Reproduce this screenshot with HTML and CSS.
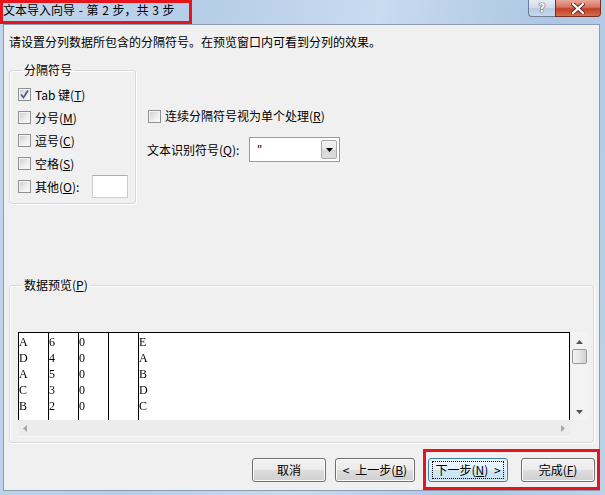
FILE: index.html
```html
<!DOCTYPE html>
<html lang="zh-CN">
<head>
<meta charset="utf-8">
<title>文本导入向导</title>
<link rel="stylesheet" href="styles.css">
</head>
<body>
<div class="window">
  <header class="titlebar">
    <span class="title">文本导入向导 - 第 2 步，共 3 步</span>
    <div class="caption-btns">
      <span class="cap help">?</span>
      <span class="cap close"><svg width="14" height="11" viewBox="0 0 14 11"><path d="M2 1 L12 10 M12 1 L2 10" stroke="#5a2a24" stroke-width="4" stroke-linecap="square"/><path d="M2 1 L12 10 M12 1 L2 10" stroke="#fff" stroke-width="2.2" stroke-linecap="square"/></svg></span>
    </div>
  </header>
  <main class="client">
    <p class="intro">请设置分列数据所包含的分隔符号。在预览窗口内可看到分列的效果。</p>
    <div class="options">
      <fieldset class="group delims">
        <legend>分隔符号</legend>
        <div class="check"><span class="box"><svg width="11" height="11" viewBox="0 0 11 11"><path d="M2 5.5 L4.5 8.5 L9 1.5" fill="none" stroke="#4a5f97" stroke-width="1.8"/></svg></span>Tab 键(<u>T</u>)</div>
        <div class="check"><span class="box"></span>分号(<u>M</u>)</div>
        <div class="check"><span class="box"></span>逗号(<u>C</u>)</div>
        <div class="check"><span class="box"></span>空格(<u>S</u>)</div>
        <div class="check"><span class="box"></span>其他(<u>O</u>):<span class="textbox"></span></div>
      </fieldset>
      <div class="side">
        <div class="check consec"><span class="box"></span>连续分隔符号视为单个处理(<u>R</u>)</div>
        <div class="qualifier">
          <span class="q-label">文本识别符号(<u>Q</u>):</span>
          <div class="combo">
            <span class="combo-val">"</span>
            <span class="combo-btn"><svg width="7" height="4" viewBox="0 0 7 4"><path d="M0 0 H7 L3.5 4 Z" fill="#000"/></svg></span>
          </div>
        </div>
      </div>
    </div>
    <fieldset class="group preview">
      <legend>数据预览(<u>P</u>)</legend>
      <div class="pv">
        <div class="pv-main">
          <div class="grid">
            <div class="col"><div>A</div><div>D</div><div>A</div><div>C</div><div>B</div></div>
            <div class="col"><div>6</div><div>4</div><div>5</div><div>3</div><div>2</div></div>
            <div class="col"><div>0</div><div>0</div><div>0</div><div>0</div><div>0</div></div>
            <div class="col"></div>
            <div class="col last"><div>E</div><div>A</div><div>B</div><div>D</div><div>C</div></div>
          </div>
          <div class="hscroll">
            <svg width="4" height="7" viewBox="0 0 4 7"><path d="M4 0 V7 L0 3.5 Z" fill="#a6a6a6"/></svg>
            <svg width="4" height="7" viewBox="0 0 4 7"><path d="M0 0 V7 L4 3.5 Z" fill="#a6a6a6"/></svg>
          </div>
        </div>
        <div class="vscroll">
          <svg width="7" height="4" viewBox="0 0 7 4"><path d="M0 4 H7 L3.5 0 Z" fill="#555"/></svg>
          <span class="thumb"></span>
          <span class="spacer"></span>
          <svg width="7" height="4" viewBox="0 0 7 4"><path d="M0 0 H7 L3.5 4 Z" fill="#555"/></svg>
        </div>
      </div>
    </fieldset>
    <div class="buttons">
      <button class="btn narrow">取消</button>
      <button class="btn wide">&lt; 上一步(<u>B</u>)</button>
      <button class="btn wide default"><span class="focus">下一步(<u>N</u>) &gt;</span></button>
      <button class="btn narrow">完成(<u>F</u>)</button>
    </div>
  </main>
</div>
<div class="mark mark-title"></div>
<div class="mark mark-buttons"></div>
</body>
</html>
```

FILE: styles.css
```css
* { box-sizing: border-box; }

html, body {
  margin: 0;
  padding: 0;
}

body {
  width: 605px;
  height: 495px;
  overflow: hidden;
  position: relative;
  font-family: "Noto Sans CJK SC", "Noto Sans", sans-serif;
  font-size: 12px;
  line-height: 16px;
  color: #000;
  background: linear-gradient(100deg, #c2d6ec 0%, #b6cde8 30%, #c8dbef 55%, #adc6e3 80%, #bcd2ea 100%);
}

.window {
  width: 605px;
  height: 495px;
  display: flex;
  flex-direction: column;
}

/* title bar */
.titlebar {
  height: 24px;
  display: flex;
  justify-content: space-between;
  align-items: flex-start;
}

.title {
  padding: 2px 0 0 3px;
  font-size: 12px;
  line-height: 16px;
  color: #000;
  word-spacing: 1px;
}

.caption-btns {
  display: flex;
  margin-right: 4px;
}

.cap {
  height: 17px;
  display: flex;
  align-items: center;
  justify-content: center;
  border: 1px solid #6b7c93;
  border-top: none;
}

.help {
  width: 27px;
  border-right: none;
  border-bottom-left-radius: 4px;
  background: linear-gradient(#e4ecf5 0%, #cfdbea 50%, #b9cbe0 51%, #c8d8ea 100%);
  color: #fff;
  font-family: "DejaVu Sans", sans-serif;
  font-weight: bold;
  font-size: 12px;
  text-shadow: 0 0 1px #3d4a5c, 0 0 1px #3d4a5c, 0 0 1px #3d4a5c;
}

.close {
  width: 46px;
  border-color: #7a2b22;
  border-bottom-right-radius: 4px;
  background: linear-gradient(#e9a99e 0%, #d7725f 45%, #c23f26 55%, #d3704f 100%);
}

/* client area */
.client {
  margin: 0 5px 4px 3px;
  flex: 1;
  background: #f0f0f0;
  border: 1px solid #8a9db5;
  padding: 0 4px 0 5px;
  display: flex;
  flex-direction: column;
}

.intro {
  margin: 9px 0 0 0;
  line-height: 16px;
}

.options {
  display: flex;
  margin-top: 12px;
}

/* group boxes */
.group {
  margin: 0;
  border: 1px solid #d5d9de;
  border-radius: 3px;
  box-shadow: inset 1px 1px 0 #fff, 1px 1px 0 #fff;
  min-width: 0;
}

.group legend {
  margin-left: 4px;
  padding: 0 2px;
  line-height: 16px;
}

.delims {
  width: 127px;
  padding: 5px 7px 5px 8px;
}

.check {
  height: 23px;
  display: flex;
  align-items: center;
  white-space: nowrap;
}

.box {
  width: 13px;
  height: 13px;
  flex: none;
  margin-right: 4px;
  border: 1px solid #8e8f8f;
  background: linear-gradient(135deg, #cbcbcb 0%, #eeeeee 60%, #fafafa 100%);
  box-shadow: inset 0 0 0 1px #f4f4f4;
  display: flex;
  align-items: center;
  justify-content: center;
}

.textbox {
  margin-left: auto;
  width: 36px;
  height: 23px;
  background: #fff;
  border: 1px solid #c9ced6;
  border-top-color: #abadb3;
}

.side {
  margin-left: 11px;
  padding-top: 44px;
  display: flex;
  flex-direction: column;
}

.consec {
  height: 20px;
  margin-left: 1px;
}

.qualifier {
  margin-top: 11px;
  display: flex;
  align-items: center;
  height: 25px;
}

.q-label {
  width: 102px;
}

.combo {
  width: 91px;
  height: 25px;
  background: #fff;
  border: 1px solid #9a9a9a;
  display: flex;
  align-items: center;
  padding: 2px;
}

.combo-val {
  flex: 1;
  padding-left: 5px;
  font-size: 11px;
}

.combo-btn {
  width: 16px;
  height: 19px;
  border: 1px solid #a8a8a8;
  border-radius: 2px;
  background: linear-gradient(#f4f4f4 0%, #e6e6e6 50%, #d6d6d6 51%, #dcdcdc 100%);
  display: flex;
  align-items: center;
  justify-content: center;
}

/* preview */
.preview {
  margin-top: 73px;
  width: 585px;
  padding: 39px 0 5px 8px;
}

.pv {
  display: flex;
  align-items: flex-start;
}

.pv-main {
  width: 552px;
}

.grid {
  height: 88px;
  display: flex;
  background: #fff;
  border-top: 1px solid #000;
  border-right: 1px solid #000;
  font-family: "Liberation Serif", serif;
  font-size: 12px;
  line-height: 16px;
  padding-top: 1px;
  color: #000;
  filter: grayscale(1);
}

.col {
  width: 30px;
  border-left: 1px solid #000;
  margin-top: -1px;
  padding-top: 1px;
  padding-left: 0;
  color: #000;
}

.col.last {
  flex: 1;
}

.hscroll {
  height: 17px;
  background: #ececec;
  border-bottom: 1px solid #f7f7f7;
  display: flex;
  align-items: center;
  justify-content: space-between;
  padding: 0 5px;
}

.vscroll {
  width: 17px;
  height: 88px;
  margin-left: 1px;
  background: #f3f3f3;
  display: flex;
  flex-direction: column;
  align-items: center;
  padding: 8px 0 6px;
}

.thumb {
  margin-top: 5px;
  width: 15px;
  height: 15px;
  border: 1px solid #9a9a9a;
  border-radius: 2px;
  background: linear-gradient(90deg, #f2f2f2 0%, #e6e6e6 50%, #cfcfcf 100%);
}

.spacer {
  flex: 1;
}

/* buttons */
.buttons {
  margin-top: 15px;
  display: flex;
  justify-content: flex-end;
  gap: 9px;
}

.btn {
  height: 24px;
  padding: 0;
  font-family: "Noto Sans CJK SC", "Noto Sans", sans-serif;
  font-size: 12px;
  line-height: 16px;
  word-spacing: 3px;
  color: #000;
  border: 1px solid #707070;
  border-radius: 3px;
  background: linear-gradient(#f2f2f2 0%, #ebebeb 50%, #dddddd 51%, #cfcfcf 100%);
  box-shadow: inset 0 0 0 1px #fbfbfb;
  display: flex;
  align-items: center;
  justify-content: center;
}

.btn.narrow { width: 74px; }
.btn.wide { width: 80px; }
.btn.default {
  margin-left: 4px;
  margin-right: 4px;
  border-color: #3c7fb1;
  background: linear-gradient(#f0f8fd 0%, #e3f2fb 50%, #cfe8f7 51%, #c4e2f4 100%);
  box-shadow: inset 0 0 0 1px #e8f4fb;
}

.focus {
  display: flex;
  align-items: center;
  justify-content: center;
  width: 72px;
  height: 18px;
  border: 1px dotted #000;
}

/* annotation marks */
.mark {
  position: absolute;
  border: 3px solid #e8141b;
  pointer-events: none;
}

.mark-title {
  left: 0;
  top: 0;
  width: 192px;
  height: 24px;
}

.mark-buttons {
  left: 423px;
  top: 449px;
  width: 177px;
  height: 41px;
}
```
